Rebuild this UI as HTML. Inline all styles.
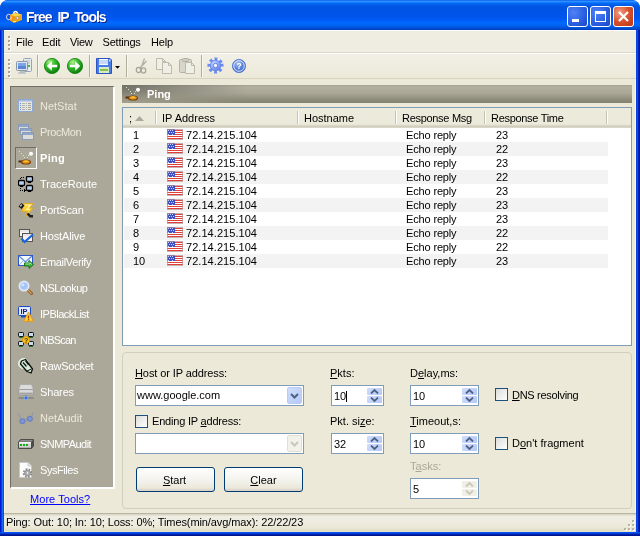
<!DOCTYPE html>
<html><head><meta charset="utf-8"><title>Free IP Tools</title>
<style>
*{box-sizing:border-box;margin:0;padding:0}
html,body{width:640px;height:536px;overflow:hidden;background:#fff}
body{font:11px "Liberation Sans",sans-serif;color:#000;position:relative}
.a{position:absolute;white-space:nowrap}
u{text-decoration:underline}
#frame{position:absolute;left:0;top:0;width:640px;height:536px;background:#0054e3;border-radius:8px 8px 0 0;overflow:hidden;will-change:transform}
#title{position:absolute;left:0;top:0;width:640px;height:30px;border-radius:8px 8px 0 0;
background:linear-gradient(to bottom,#0058ee 0%,#3593ff 4%,#288eff 6%,#127dff 8%,#036ffc 10%,#0262ee 14%,#0057e5 20%,#0054e3 24%,#0055eb 56%,#005bf5 66%,#026afe 76%,#0062ef 86%,#0056e0 90%,#004cd0 95%,#003cb8 100%)}
#title .txt{position:absolute;left:26px;top:9px;font:bold 14px "Liberation Sans",sans-serif;color:#fff;text-shadow:1px 1px 0 #0a2a9c;white-space:nowrap;letter-spacing:-1px;word-spacing:3px}
.tb{position:absolute;top:6px;width:21px;height:21px;border:1px solid #fff;border-radius:3px;background:radial-gradient(circle at 30% 30%,#4f82f5 0%,#2a5de0 60%,#1c44c4 100%)}
.tb.close{background:radial-gradient(circle at 30% 30%,#f0a088 0%,#d8502c 50%,#b93414 100%)}
#client{position:absolute;left:4px;top:30px;width:632px;height:502px;background:#ece9d8;box-shadow:inset 1px 0 0 #fbf3dc,inset -1px 0 0 #fbf3dc}
#bl{position:absolute;left:0;top:30px;width:4px;height:506px;background:linear-gradient(to right,#0019cf 0,#0019cf 1px,#0a40e0 1px,#0a40e0 2px,#166aee 2px,#166aee 3px,#0054e3 3px)}
#br{position:absolute;left:636px;top:30px;width:4px;height:506px;background:linear-gradient(to right,#0842ea 0,#0842ea 1px,#0a50e0 1px,#0a50e0 2px,#0024b0 2px,#0024b0 3px,#001590 3px)}
#bb{position:absolute;left:0;top:532px;width:640px;height:4px;background:linear-gradient(to bottom,#0a50f0 0,#0a50f0 1px,#0040d8 1px,#0040d8 2px,#0020a8 2px,#0020a8 3px,#001590 3px)}
#menubar{position:absolute;left:0;top:0;width:632px;height:23px;border-top:1px solid #fff;border-bottom:1px solid #dcd8c8;background:#efede2}
.mi{position:absolute;top:5px;font-size:11px}
.grip{position:absolute;width:3px;background:linear-gradient(to bottom,#a8a594 0,#a8a594 2px,transparent 2px) 0 0/2px 4px repeat-y,linear-gradient(to bottom,transparent 0,transparent 1px,#fff 1px,#fff 3px,transparent 3px) 1px 0/2px 4px repeat-y}
#toolbar{position:absolute;left:0;top:23px;width:632px;height:26px;border-top:1px solid #fff;border-bottom:1px solid #d8d4c2;background:linear-gradient(to bottom,#f2f0e6,#ece9d8)}
.sep{position:absolute;top:1px;width:2px;height:22px;border-left:1px solid #b0ad9c;border-right:1px solid #f8f7f0}
#side{position:absolute;left:6px;top:56px;width:105px;height:403px;background:#aca899;border-top:1px solid #716f64;border-left:1px solid #716f64;border-right:2px solid #fff;border-bottom:2px solid #fff}
.si{position:absolute;left:29px;font-size:11px;color:#fff;white-space:nowrap}
.si.dis{color:#ece9d8}
.selbox{position:absolute;left:4px;top:60px;width:22px;height:22px;border:1px solid;border-color:#716f64 #fff #fff #716f64}
.ic{line-height:0;position:absolute;left:7px;width:16px;height:16px}
#hdr{position:absolute;left:118px;top:55px;width:510px;height:18px;background:linear-gradient(to bottom,#a5a293 0,#b3b0a0 2px,#aaa797 45%,#8e8c7b 80%,#838170 100%)}
#hdr .ov{position:absolute;left:0;top:0;width:125px;height:18px;background:linear-gradient(to bottom,#74726a 0%,#7f7d71 35%,#969382 70%,#a3a090 100%);-webkit-mask-image:linear-gradient(to right,#000 0,#000 10px,transparent 100%);mask-image:linear-gradient(to right,#000 0,#000 10px,transparent 100%)}
#hdr .t{position:absolute;left:25px;top:3px;font:bold 11px "Liberation Sans",sans-serif;color:#fff}
#lv{position:absolute;left:118px;top:77px;width:510px;height:239px;background:#fff;border:1px solid #7f9db9}
#lvh{position:absolute;left:0;top:0;width:508px;height:20px;background:linear-gradient(to bottom,#ebeadb 0,#ebeadb 16px,#e2dfce 17px,#d6d2c2 18px,#cbc7b8 19px,#e8e6da 20px)}
.hc{position:absolute;top:4px;font-size:11px}
.hs{position:absolute;top:3px;width:2px;height:13px;border-left:1px solid #c5c2b2;border-right:1px solid #fff}
.row{position:absolute;left:1px;width:484px;height:14px}
.row.alt{background:#f3f3f3}
.row span{position:absolute;top:0;line-height:14px;font-size:11px}
.flag{position:absolute;left:43px;top:1px;width:16px;height:11px}
#gb{position:absolute;left:118px;top:322px;width:510px;height:157px;border:1px solid #d0d0bf;border-radius:4px}
.gd{z-index:3;position:absolute;width:2px;height:2px;background:#b8b4a2;box-shadow:1px 1px 0 #fff}
.lbl{position:absolute;font-size:11px;white-space:nowrap}
.edit{position:absolute;background:#fff;border:1px solid #7f9db9;font-size:11px}
.edit span{position:absolute;left:2px;top:4px}
.edit.c span{left:1px;top:3px}
.cb{position:absolute;width:13px;height:13px;border:1px solid #1c5180;background:linear-gradient(135deg,#dcdcd7 0%,#fff 100%)}
.btn{position:absolute;height:25px;border:1px solid #003c74;border-radius:3px;background:linear-gradient(to bottom,#fff 0%,#f4f3ee 50%,#ece9dc 85%,#d6d0c5 100%);text-align:center;line-height:25px;font-size:11px}
.spin{position:absolute;right:1px;top:1px;width:15px;height:17px}
.sb{position:absolute;left:0;width:15px;height:7px;border-radius:1px;background:linear-gradient(135deg,#d0dcfc,#b4c8f6);line-height:0}
.sb svg{position:absolute;left:3px;top:1px}
.dd{position:absolute;right:1px;top:1px;width:15px;height:17px;border:1px solid #b8ccf8;border-radius:2px;background:linear-gradient(135deg,#cfdcfc,#b6c9f7)}
.dd.d{border-color:#e0dfd3;background:#f3f2ea}
.spin.d .sb{background:#f1f0e7}
.caret{position:static!important;display:inline-block;width:1px;height:11px;background:#000;vertical-align:-2px}
#status{position:absolute;left:0;top:483px;width:632px;height:19px;background:linear-gradient(to bottom,#b8b5a3 0,#b8b5a3 1px,#dad7c8 1px,#dad7c8 2px,#efede2 3px,#efede2 8px,#ece9d8 14px,#e4e0cc 17px,#dcd8c2 18px,#f4ecd0 19px)}
#status .t{position:absolute;left:2px;top:3px;font-size:11px;letter-spacing:-0.1px}
</style></head><body>
<div id="frame">
<div id="title"><div class="a" style="left:6px;top:10px"><svg width="17" height="14" viewBox="0 0 17 14" ><ellipse cx="2.800" cy="7" rx="2.300" ry="2.800" fill="none" stroke="#d8d4e8" stroke-width="1"/>
<path d="M7 3.500 Q9.500 -0.500 12 3.500" fill="none" stroke="#fff" stroke-width="1.300"/>
<path d="M4 5 L9 3 L16 4.500 L16 10 L8 13 L4 10.500 Z" fill="#f0a818"/><path d="M4 5 L9 3 L16 4.500 L10 6.500 Z" fill="#fcd848"/><path d="M4 5 L10 6.500 L8 13 L4 10.500 Z" fill="#e89010" opacity="0.600"/>
<rect x="10.500" y="6.500" width="1.600" height="3" rx="0.800" fill="#fff" stroke="#5a5ac0" stroke-width="0.400"/><rect x="4.500" y="6.500" width="1" height="3" fill="#fff" opacity="0.800"/><path d="M7 11.500 h3" stroke="#fff8d0" stroke-width="0.800"/></svg></div><div class="txt">Free IP Tools</div>
<div class="tb" style="left:567px"><div class="a" style="left:4px;top:12px;width:7px;height:3px;background:#fff"></div></div><div class="tb" style="left:590px"><div class="a" style="left:4px;top:4px;width:11px;height:11px;border:1px solid #fff;border-top-width:3px"></div></div><div class="tb close" style="left:613px"><svg class="a" style="left:4px;top:4px" width="11" height="11" viewBox="0 0 11 11"><path d="M1 1 L10 10 M10 1 L1 10" stroke="#fff" stroke-width="2.2"/></svg></div></div>
<div id="bl"></div><div id="br"></div><div id="bb"></div><div id="client">
<div id="menubar"><div class="grip" style="left:4px;top:5px;height:16px"></div>
<div class="mi" style="left:12px;letter-spacing:-0.1px">File</div>
<div class="mi" style="left:38px;letter-spacing:-0.1px">Edit</div>
<div class="mi" style="left:66px;letter-spacing:-0.3px">View</div>
<div class="mi" style="left:98.5px;letter-spacing:-0.2px">Settings</div>
<div class="mi" style="left:147px;letter-spacing:-0.2px">Help</div>
</div>
<div id="toolbar"><div class="grip" style="left:4px;top:5px;height:19px"></div>
<div class="sep" style="left:33px"></div>
<div class="sep" style="left:85px"></div>
<div class="sep" style="left:122px"></div>
<div class="sep" style="left:197px"></div>
<div class="a" style="left:12px;top:4px;line-height:0"><svg width="16" height="16" viewBox="0 0 16 16" ><rect x="7.500" y="0.500" width="8" height="13" rx="1" fill="#e8ecf0" stroke="#9aa4b0"/><rect x="9" y="2.500" width="5" height="1" fill="#b0b8c4"/><rect x="9" y="4.500" width="5" height="1" fill="#b0b8c4"/><rect x="12" y="7" width="2" height="2" fill="#48b048"/>
<rect x="0.500" y="3.500" width="11" height="9" rx="1" fill="#dfe4ea" stroke="#8a96a8"/><rect x="2" y="5" width="8" height="6" fill="#5a86d8"/><rect x="2" y="5" width="8" height="3" fill="#7ca4e8"/>
<rect x="4" y="13" width="4" height="1.500" fill="#b8c0cc"/><rect x="2.500" y="14.500" width="7" height="1.500" rx="0.700" fill="#d0d6de" stroke="#9aa4b0" stroke-width="0.500"/></svg></div>
<div class="a" style="left:40px;top:4px;line-height:0"><svg width="16" height="16" viewBox="0 0 16 16" ><defs><radialGradient id="gl" cx="0.350" cy="0.250" r="0.800"><stop offset="0" stop-color="#b8f08c"/><stop offset="0.400" stop-color="#38c030"/><stop offset="1" stop-color="#087808"/></radialGradient></defs>
<circle cx="8" cy="8" r="7.600" fill="url(#gl)" stroke="#0a7a0a" stroke-width="0.800"/><path d="M2.800 8 L7.800 3.200 L7.800 6.800 L13.200 6.800 L13.200 9.200 L7.800 9.200 L7.800 12.800 Z" fill="#fff"/></svg></div>
<div class="a" style="left:63px;top:4px;line-height:0"><svg width="16" height="16" viewBox="0 0 16 16" ><defs><radialGradient id="gr" cx="0.350" cy="0.250" r="0.800"><stop offset="0" stop-color="#b8f08c"/><stop offset="0.400" stop-color="#38c030"/><stop offset="1" stop-color="#087808"/></radialGradient></defs>
<circle cx="8" cy="8" r="7.600" fill="url(#gr)" stroke="#0a7a0a" stroke-width="0.800"/><g transform="translate(16,0) scale(-1,1)"><path d="M2.800 8 L7.800 3.200 L7.800 6.800 L13.200 6.800 L13.200 9.200 L7.800 9.200 L7.800 12.800 Z" fill="#fff"/></g></svg></div>
<div class="a" style="left:92px;top:4px;line-height:0"><svg width="16" height="16" viewBox="0 0 16 16" ><path d="M0.500 0.500 H14 L15.500 2 V15.500 H0.500 Z" fill="#4a7ce8" stroke="#2c54c0"/><rect x="3" y="1" width="9" height="6" fill="#f4f8ff"/><rect x="3" y="2.500" width="9" height="1" fill="#9cb8ec"/><rect x="3" y="4.500" width="9" height="1" fill="#9cb8ec"/>
<rect x="3" y="9" width="10" height="6" fill="#d8ecc0"/><rect x="4" y="11" width="8" height="2" fill="#88c050"/><rect x="13" y="1.500" width="1.500" height="2" fill="#c8d8f8"/></svg></div>
<div class="a" style="left:111px;top:11px;line-height:0"><svg width="5" height="3" viewBox="0 0 5 3" ><path d="M0 0 H5 L2.500 2.800 Z" fill="#000"/></svg></div>
<div class="a" style="left:131px;top:4px;line-height:0"><svg width="16" height="16" viewBox="0 0 16 16" ><path d="M9.500 0.500 L6 10 M11.500 3 L4.500 10.500" fill="none" stroke="#b4b2a4" stroke-width="1.400"/>
<ellipse cx="3.500" cy="12" rx="2.200" ry="2.600" fill="none" stroke="#a8a698" stroke-width="1.300"/><ellipse cx="8.500" cy="12.500" rx="2.200" ry="2.600" fill="none" stroke="#a8a698" stroke-width="1.300"/></svg></div>
<div class="a" style="left:152px;top:4px;line-height:0"><svg width="16" height="16" viewBox="0 0 16 16" ><path d="M0.5 0.5 H6.5 L9.5 3.5 V11.5 H0.5 Z" fill="#f0efe6" stroke="#bcbaac"/><path d="M6.5 0.5 V3.5 H9.5" fill="none" stroke="#bcbaac"/><path d="M6.5 4.5 H12.5 L15.5 7.5 V15.5 H6.5 Z" fill="#f0efe6" stroke="#bcbaac"/><path d="M12.5 4.5 V7.5 H15.5" fill="none" stroke="#bcbaac"/></svg></div>
<div class="a" style="left:175px;top:4px;line-height:0"><svg width="16" height="16" viewBox="0 0 16 16" ><rect x="0.500" y="1.500" width="12" height="13" rx="1" fill="#d8d6ca" stroke="#b4b2a4"/><rect x="3.500" y="0.500" width="6" height="3" rx="1" fill="#cfcdc0" stroke="#b0aea0"/><path d="M6.5 4.5 H12.5 L15.5 7.5 V15.5 H6.5 Z" fill="#f0efe6" stroke="#bcbaac"/><path d="M12.5 4.5 V7.5 H15.5" fill="none" stroke="#bcbaac"/></svg></div>
<div class="a" style="left:203px;top:3px;line-height:0"><svg width="17" height="17" viewBox="0 0 17 17" ><defs><radialGradient id="gg" cx="0.350" cy="0.300" r="0.800"><stop offset="0" stop-color="#c4d4ff"/><stop offset="0.600" stop-color="#86a2f6"/><stop offset="1" stop-color="#5878e4"/></radialGradient></defs>
<circle cx="8.500" cy="8.500" r="6.400" fill="none" stroke="#6c8cf0" stroke-width="3.400" stroke-dasharray="2.700 2.327" transform="rotate(-15 8.500 8.500)"/>
<circle cx="8.500" cy="8.500" r="5.300" fill="url(#gg)" stroke="#5c7ce8" stroke-width="0.800"/><circle cx="8.500" cy="8.500" r="2.200" fill="#f4f4fc" stroke="#5470d8" stroke-width="0.900"/></svg></div>
<div class="a" style="left:228px;top:5px;line-height:0"><svg width="14" height="14" viewBox="0 0 14 14" ><defs><radialGradient id="gh" cx="0.400" cy="0.300" r="0.800"><stop offset="0" stop-color="#a8c0f0"/><stop offset="0.500" stop-color="#5c84dc"/><stop offset="1" stop-color="#3c64c0"/></radialGradient></defs>
<circle cx="7" cy="7" r="6.600" fill="url(#gh)" stroke="#4a70d0" stroke-width="0.800"/><circle cx="7" cy="7" r="5.300" fill="none" stroke="#e4ecfc" stroke-width="0.900"/>
<text x="4.600" y="10.200" font-family="Liberation Sans, sans-serif" font-weight="bold" font-size="8.500" fill="#fff">?</text></svg></div>
</div>
<div id="side"><div class="selbox"></div>
<div class="ic" style="top:11px"><svg width="16" height="16" viewBox="0 0 16 16" ><rect x="0.5" y="1.5" width="14" height="12" fill="#e6e6e0" stroke="#8ca8d4"/>
<rect x="1" y="2" width="13" height="1.500" fill="#a4bce4"/><rect x="2" y="5" width="1" height="1" fill="#6c8cd0"/><rect x="4" y="5" width="3" height="1" fill="#b4b4ac"/><rect x="8" y="5" width="1" height="1" fill="#a8a8a0"/><rect x="10" y="5" width="3" height="1" fill="#a4a49c"/><rect x="2" y="7" width="1" height="1" fill="#6c8cd0"/><rect x="4" y="7" width="3" height="1" fill="#b4b4ac"/><rect x="8" y="7" width="1" height="1" fill="#a8a8a0"/><rect x="10" y="7" width="3" height="1" fill="#a4a49c"/><rect x="2" y="9" width="1" height="1" fill="#6c8cd0"/><rect x="4" y="9" width="3" height="1" fill="#b4b4ac"/><rect x="8" y="9" width="1" height="1" fill="#a8a8a0"/><rect x="10" y="9" width="3" height="1" fill="#a4a49c"/><rect x="2" y="11" width="1" height="1" fill="#6c8cd0"/><rect x="4" y="11" width="3" height="1" fill="#b4b4ac"/><rect x="8" y="11" width="1" height="1" fill="#a8a8a0"/><rect x="10" y="11" width="3" height="1" fill="#a4a49c"/></svg></div><div class="si dis" style="top:13px;letter-spacing:0px">NetStat</div>
<div class="ic" style="top:37px"><svg width="16" height="16" viewBox="0 0 16 16" ><rect x="0.5" y="0.5" width="10" height="6" fill="#dedcd6" stroke="#8a9cba"/><rect x="1" y="1" width="9" height="2" fill="#8fa6cc"/><rect x="2.5" y="4.5" width="11" height="6" fill="#dedcd6" stroke="#8a9cba"/><rect x="3" y="5" width="10" height="2" fill="#8fa6cc"/><rect x="4.5" y="8.5" width="11" height="7" fill="#dedcd6" stroke="#8a9cba"/><rect x="5" y="9" width="10" height="2" fill="#8fa6cc"/></svg></div><div class="si dis" style="top:39px;letter-spacing:-0.4px">ProcMon</div>
<div class="ic" style="top:63px"><svg width="16" height="16" viewBox="0 0 16 16" ><g fill="#cfe8c8"><rect x="1" y="1" width="1" height="1"/><rect x="3" y="3" width="1" height="1"/><rect x="5" y="5" width="1" height="1"/><rect x="6" y="7" width="1" height="1"/><rect x="9" y="7" width="1" height="1"/><rect x="10" y="5" width="1" height="1"/></g>
<circle cx="13" cy="3.800" r="2" fill="#fff"/>
<path d="M0.500 11.500h4" stroke="#5a2a08" stroke-width="2"/>
<ellipse cx="8" cy="12" rx="5" ry="2.600" fill="#7a3c0a"/>
<ellipse cx="8" cy="11.700" rx="3.800" ry="1.800" fill="#e49a1c"/>
<ellipse cx="8" cy="11.200" rx="2" ry="0.800" fill="#f8c848"/></svg></div><div class="si" style="top:65px;font-weight:bold;letter-spacing:0.3px">Ping</div>
<div class="ic" style="top:89px"><svg width="16" height="16" viewBox="0 0 16 16" ><rect x="8.5" y="0.5" width="6" height="5" rx="1" fill="#b8d0f0" stroke="#000" stroke-width="1.300"/><rect x="10" y="6" width="3" height="1" fill="#000"/><rect x="0.5" y="4.5" width="6" height="5" rx="1" fill="#b8d0f0" stroke="#000" stroke-width="1.300"/><rect x="2" y="10" width="3" height="1" fill="#000"/><rect x="8.5" y="9.5" width="6" height="5" rx="1" fill="#b8d0f0" stroke="#000" stroke-width="1.300"/><rect x="10" y="15" width="3" height="1" fill="#000"/><g fill="#000"><rect x="3" y="1" width="1" height="1"/><rect x="5" y="1" width="1" height="1"/><rect x="2" y="2" width="1" height="1"/><rect x="2" y="12" width="1" height="1"/><rect x="2" y="14" width="1" height="1"/><rect x="4" y="14" width="1" height="1"/><rect x="6" y="13" width="1" height="3"/><rect x="7" y="14" width="1" height="1"/></g></svg></div><div class="si" style="top:91px;letter-spacing:0px">TraceRoute</div>
<div class="ic" style="top:115px"><svg width="16" height="16" viewBox="0 0 16 16" ><path d="M5.500 1.500 L15.500 1.500 L11.500 6 L15 6 L7.500 15 L9.500 9.500 L4.500 9.500 Z" fill="#f8d23c" stroke="#e8a818" stroke-width="0.900" stroke-linejoin="round"/>
<path d="M7 3 L12.500 3 L9 7.500 L12 7.500" fill="none" stroke="#fff4b0" stroke-width="1.200"/>
<path d="M0.500 4.500 L3.500 1 L6.500 3.500 L3.500 7 Z" fill="#1a1a1a"/><path d="M2.300 4.300 L3.800 2.600" stroke="#e8e8e8" stroke-width="1.200"/>
<path d="M9.500 11.500 L12.500 14.500" stroke="#1a1a1a" stroke-width="2.400"/><rect x="11.500" y="13" width="3.500" height="2.500" fill="#222"/></svg></div><div class="si" style="top:117px;letter-spacing:-0.2px">PortScan</div>
<div class="ic" style="top:141px"><svg width="16" height="16" viewBox="0 0 16 16" ><rect x="1.5" y="1.5" width="10" height="7" fill="#f4f4f4" stroke="#555"/><rect x="2" y="2" width="9" height="2" fill="#e8e8e8"/><rect x="4.5" y="5.5" width="10" height="8" fill="#f4f4f4" stroke="#555"/><rect x="5" y="6" width="9" height="2" fill="#e8e8e8"/><path d="M3.500 10.500 L6.500 14 L15 6.500" fill="none" stroke="#1a64e0" stroke-width="2.200"/></svg></div><div class="si" style="top:143px;letter-spacing:-0.15px">HostAlive</div>
<div class="ic" style="top:167px"><svg width="16" height="16" viewBox="0 0 16 16" ><rect x="0.5" y="1.500" width="14" height="10" fill="#f4f8ff" stroke="#2a56c8"/>
<path d="M1 2 L7.500 8 L14 2" fill="none" stroke="#5a88e0" stroke-width="1.200"/><path d="M1 11 L5.500 6.500 M14 11 L9.500 6.500" stroke="#9ab8f0" stroke-width="1"/>
<path d="M6.500 9 L11 9 L11 6.500 L15.500 10.500 L11 14.500 L11 12 L6.500 12 Z" fill="#3cb43c" stroke="#0e6e0e" stroke-width="0.9"/>
<path d="M7.500 10 L11.800 10 L11.800 8.800 L13.800 10.500" fill="none" stroke="#b4ecb0" stroke-width="0.9"/></svg></div><div class="si" style="top:169px;letter-spacing:-0.35px">EmailVerify</div>
<div class="ic" style="top:193px"><svg width="16" height="16" viewBox="0 0 16 16" ><path d="M9 9 L13.500 13.500" stroke="#8a5a22" stroke-width="3" stroke-linecap="round"/><path d="M9.500 9.500 L13.300 13.300" stroke="#e0a860" stroke-width="1.200" stroke-linecap="round"/>
<circle cx="6" cy="6" r="4.800" fill="#bcd4f8" stroke="#dce8fc" stroke-width="1.400"/><circle cx="6" cy="6" r="3.200" fill="#a8c4f4"/><circle cx="4.800" cy="4.800" r="1.500" fill="#d4e4fc"/></svg></div><div class="si" style="top:195px;letter-spacing:-0.5px">NSLookup</div>
<div class="ic" style="top:219px"><svg width="16" height="16" viewBox="0 0 16 16" ><rect x="0.5" y="0.500" width="12" height="9" rx="1" fill="#d8e4fc" stroke="#1c48c0"/><rect x="1.500" y="1.500" width="10" height="7" fill="#e8f0ff"/>
<text x="2.500" y="7.800" font-family="Liberation Sans, sans-serif" font-weight="bold" font-size="7.500" fill="#102080">IP</text>
<rect x="3" y="10" width="5" height="1.500" fill="#1c48c0"/>
<path d="M10.500 6 L15.500 15.300 L5.500 15.300 Z" fill="#f8d038" stroke="#e89010" stroke-width="0.9" stroke-linejoin="round"/><path d="M10.500 9.500v3" stroke="#a04000" stroke-width="1.300"/><rect x="9.850" y="13.200" width="1.300" height="1.200" fill="#a04000"/></svg></div><div class="si" style="top:221px;letter-spacing:-0.5px">IPBlackList</div>
<div class="ic" style="top:245px"><svg width="16" height="16" viewBox="0 0 16 16" ><path d="M3 3 L13 13 M13 3 L3 13" stroke="#222" stroke-width="1.400"/><rect x="0.5" y="0.5" width="5" height="4" rx="0.8" fill="#c8dcf4" stroke="#111"/><rect x="1" y="5" width="4" height="1" fill="#2a7a2a"/><rect x="10.5" y="0.5" width="5" height="4" rx="0.8" fill="#c8dcf4" stroke="#111"/><rect x="11" y="5" width="4" height="1" fill="#2a7a2a"/><rect x="0.5" y="9.5" width="5" height="4" rx="0.8" fill="#c8dcf4" stroke="#111"/><rect x="1" y="14" width="4" height="1" fill="#2a7a2a"/><rect x="10.5" y="9.5" width="5" height="4" rx="0.8" fill="#c8dcf4" stroke="#111"/><rect x="11" y="14" width="4" height="1" fill="#2a7a2a"/><circle cx="8" cy="8" r="3.600" fill="#f8c41c" stroke="#d89408" stroke-width="0.800"/><text x="6" y="10.600" font-family="Liberation Sans, sans-serif" font-weight="bold" font-size="7" fill="#5a3200">?</text></svg></div><div class="si" style="top:247px;letter-spacing:-0.8px">NBScan</div>
<div class="ic" style="top:271px"><svg width="16" height="16" viewBox="0 0 16 16" ><circle cx="5.500" cy="5.500" r="5" fill="#cfe8d4" stroke="#e8f4e8" stroke-width="1"/>
<path d="M3.500 3 L7.500 1.500 L14.500 11 L13 15 L9 13.500 L2.500 6 Z" fill="#d4ecd8" stroke="#111" stroke-width="1.300" stroke-linejoin="round"/>
<path d="M5 4.500 L8.500 8.500 M7.500 3 L10.500 7" stroke="#111" stroke-width="1.200"/><path d="M9 13 L13.500 11" stroke="#111" stroke-width="1"/></svg></div><div class="si" style="top:273px;letter-spacing:-0.25px">RawSocket</div>
<div class="ic" style="top:297px"><svg width="16" height="16" viewBox="0 0 16 16" ><path d="M2.500 0.500 L13.500 0.500 L15.500 5.500 L0.500 5.500 Z" fill="#dcdcdc" stroke="#a8a8a8" stroke-width="0.800"/>
<rect x="0.500" y="5.500" width="15" height="5.500" rx="1" fill="#c4c4c4" stroke="#989898" stroke-width="0.800"/><path d="M1.500 7h13" stroke="#ececec"/><path d="M1.500 9.500h13" stroke="#a0a0a0"/>
<path d="M8 11v2.500M0.500 14h15" stroke="#808080" stroke-width="1.500"/><circle cx="8" cy="14" r="1.800" fill="#2a6cf0" stroke="#9cc0ff" stroke-width="0.600"/></svg></div><div class="si" style="top:299px;letter-spacing:-0.15px">Shares</div>
<div class="ic" style="top:323px"><svg width="16" height="16" viewBox="0 0 16 16" ><path d="M0.500 3.500 L2.500 9 M15 2.500 L13.500 7" fill="none" stroke="#8a94a8" stroke-width="1"/><path d="M6.800 10.500 Q8 9 9.500 9.200" fill="none" stroke="#8a94a8" stroke-width="1"/>
<ellipse cx="4.500" cy="11.200" rx="2.700" ry="2.500" fill="#7c94d8" stroke="#6478b4" stroke-width="0.900"/><ellipse cx="11.800" cy="8.800" rx="2.700" ry="2.500" fill="#7c94d8" stroke="#6478b4" stroke-width="0.900"/></svg></div><div class="si dis" style="top:325px;letter-spacing:0px">NetAudit</div>
<div class="ic" style="top:349px"><svg width="16" height="16" viewBox="0 0 16 16" ><path d="M0.500 6 L2.500 3.500 L15.500 3.500 L15.500 10 L13.500 12.500 L0.500 12.500 Z" fill="#4a4a4a" stroke="#3a3a3a" stroke-width="0.700"/><path d="M1 5.800 L2.800 4 L15 4 L13.300 5.800 Z" fill="#8c8c8c"/>
<rect x="1" y="6" width="12" height="6" fill="#d4d4d4"/><rect x="1" y="6" width="12" height="1.500" fill="#f4f4f4"/><rect x="1" y="11" width="12" height="1" fill="#b0b0b0"/>
<g fill="#10b010"><rect x="2" y="8" width="2" height="2"/><rect x="5" y="8" width="2" height="2"/><rect x="8" y="8" width="2" height="2"/></g></svg></div><div class="si" style="top:351px;letter-spacing:-0.55px">SNMPAudit</div>
<div class="ic" style="top:375px"><svg width="16" height="16" viewBox="0 0 16 16" ><path d="M1.500 0.500 L10 0.500 L13.500 4 L13.500 15.500 L1.500 15.500 Z" fill="#fcfcfc" stroke="#c4c4c4" stroke-width="0.900"/><path d="M10 0.500 L10 4 L13.500 4" fill="#e4e4e4" stroke="#c4c4c4" stroke-width="0.800"/>
<circle cx="9.500" cy="11" r="3.600" fill="none" stroke="#8c8c8c" stroke-width="2.400" stroke-dasharray="1.600 1.227" transform="rotate(10 9.500 11)"/><circle cx="9.500" cy="11" r="2.900" fill="#b4b4b4" stroke="#8a8a8a" stroke-width="0.800"/><circle cx="9.500" cy="11" r="1.200" fill="#fcfcfc" stroke="#8a8a8a" stroke-width="0.500"/></svg></div><div class="si" style="top:377px;letter-spacing:-0.45px">SysFiles</div>
</div>
<div class="a" style="left:26px;top:463px;color:#0000ff;text-decoration:underline;font-size:11px;letter-spacing:0.05px">More Tools?</div>
<div id="hdr"><div class="ov"></div><div class="a" style="left:3px;top:1px;line-height:0"><svg width="16" height="16" viewBox="0 0 16 16" ><g fill="#cfe8c8"><rect x="1" y="1" width="1" height="1"/><rect x="3" y="3" width="1" height="1"/><rect x="5" y="5" width="1" height="1"/><rect x="6" y="7" width="1" height="1"/><rect x="9" y="7" width="1" height="1"/><rect x="10" y="5" width="1" height="1"/></g>
<circle cx="13" cy="3.800" r="2" fill="#fff"/>
<path d="M0.500 11.500h4" stroke="#5a2a08" stroke-width="2"/>
<ellipse cx="8" cy="12" rx="5" ry="2.600" fill="#7a3c0a"/>
<ellipse cx="8" cy="11.700" rx="3.800" ry="1.800" fill="#e49a1c"/>
<ellipse cx="8" cy="11.200" rx="2" ry="0.800" fill="#f8c848"/></svg></div><div class="t">Ping</div></div>
<div id="lv"><div id="lvh">
<div class="hc" style="left:6px;letter-spacing:0px">;</div>
<div class="hc" style="left:39px;letter-spacing:0px">IP Address</div>
<div class="hc" style="left:181px;letter-spacing:0px">Hostname</div>
<div class="hc" style="left:279px;letter-spacing:-0.3px">Response Msg</div>
<div class="hc" style="left:368px;letter-spacing:-0.3px">Response Time</div>
<svg class="a" style="left:12px;top:8px" width="9" height="5" viewBox="0 0 9 5"><path d="M0 5 L4.5 0 L9 5 Z" fill="#aca899"/></svg>
<div class="hs" style="left:32px"></div>
<div class="hs" style="left:174px"></div>
<div class="hs" style="left:272px"></div>
<div class="hs" style="left:361px"></div>
<div class="hs" style="left:483px"></div>
</div>
<div class="row" style="top:20px"><span style="left:9px">1</span><div class="flag"><svg width="16" height="11" viewBox="0 0 16 11" shape-rendering="crispEdges"><rect width="16" height="11" fill="#fff"/><g fill="#e0403c"><rect y="1" width="16" height="1"/><rect y="3" width="16" height="1"/><rect y="5" width="16" height="1"/><rect y="7" width="16" height="1"/><rect y="9" width="16" height="1"/></g>
<rect x="0" y="0" width="8" height="6" fill="#3c50c8"/><g fill="#c8d0f8"><rect x="1" y="1" width="1" height="1"/><rect x="3" y="1" width="1" height="1"/><rect x="5" y="1" width="1" height="1"/><rect x="2" y="3" width="1" height="1"/><rect x="4" y="3" width="1" height="1"/><rect x="6" y="3" width="1" height="1"/><rect x="1" y="4.500" width="1" height="1"/><rect x="5" y="4.500" width="1" height="1"/></g>
<rect x="0.500" y="0.500" width="15" height="10" fill="none" stroke="#b89090" stroke-opacity="0.700"/></svg></div><span style="left:62px;letter-spacing:0.05px">72.14.215.104</span><span style="left:282px;letter-spacing:-0.15px">Echo reply</span><span style="left:372px">23</span></div>
<div class="row alt" style="top:34px"><span style="left:9px">2</span><div class="flag"><svg width="16" height="11" viewBox="0 0 16 11" shape-rendering="crispEdges"><rect width="16" height="11" fill="#fff"/><g fill="#e0403c"><rect y="1" width="16" height="1"/><rect y="3" width="16" height="1"/><rect y="5" width="16" height="1"/><rect y="7" width="16" height="1"/><rect y="9" width="16" height="1"/></g>
<rect x="0" y="0" width="8" height="6" fill="#3c50c8"/><g fill="#c8d0f8"><rect x="1" y="1" width="1" height="1"/><rect x="3" y="1" width="1" height="1"/><rect x="5" y="1" width="1" height="1"/><rect x="2" y="3" width="1" height="1"/><rect x="4" y="3" width="1" height="1"/><rect x="6" y="3" width="1" height="1"/><rect x="1" y="4.500" width="1" height="1"/><rect x="5" y="4.500" width="1" height="1"/></g>
<rect x="0.500" y="0.500" width="15" height="10" fill="none" stroke="#b89090" stroke-opacity="0.700"/></svg></div><span style="left:62px;letter-spacing:0.05px">72.14.215.104</span><span style="left:282px;letter-spacing:-0.15px">Echo reply</span><span style="left:372px">22</span></div>
<div class="row" style="top:48px"><span style="left:9px">3</span><div class="flag"><svg width="16" height="11" viewBox="0 0 16 11" shape-rendering="crispEdges"><rect width="16" height="11" fill="#fff"/><g fill="#e0403c"><rect y="1" width="16" height="1"/><rect y="3" width="16" height="1"/><rect y="5" width="16" height="1"/><rect y="7" width="16" height="1"/><rect y="9" width="16" height="1"/></g>
<rect x="0" y="0" width="8" height="6" fill="#3c50c8"/><g fill="#c8d0f8"><rect x="1" y="1" width="1" height="1"/><rect x="3" y="1" width="1" height="1"/><rect x="5" y="1" width="1" height="1"/><rect x="2" y="3" width="1" height="1"/><rect x="4" y="3" width="1" height="1"/><rect x="6" y="3" width="1" height="1"/><rect x="1" y="4.500" width="1" height="1"/><rect x="5" y="4.500" width="1" height="1"/></g>
<rect x="0.500" y="0.500" width="15" height="10" fill="none" stroke="#b89090" stroke-opacity="0.700"/></svg></div><span style="left:62px;letter-spacing:0.05px">72.14.215.104</span><span style="left:282px;letter-spacing:-0.15px">Echo reply</span><span style="left:372px">23</span></div>
<div class="row alt" style="top:62px"><span style="left:9px">4</span><div class="flag"><svg width="16" height="11" viewBox="0 0 16 11" shape-rendering="crispEdges"><rect width="16" height="11" fill="#fff"/><g fill="#e0403c"><rect y="1" width="16" height="1"/><rect y="3" width="16" height="1"/><rect y="5" width="16" height="1"/><rect y="7" width="16" height="1"/><rect y="9" width="16" height="1"/></g>
<rect x="0" y="0" width="8" height="6" fill="#3c50c8"/><g fill="#c8d0f8"><rect x="1" y="1" width="1" height="1"/><rect x="3" y="1" width="1" height="1"/><rect x="5" y="1" width="1" height="1"/><rect x="2" y="3" width="1" height="1"/><rect x="4" y="3" width="1" height="1"/><rect x="6" y="3" width="1" height="1"/><rect x="1" y="4.500" width="1" height="1"/><rect x="5" y="4.500" width="1" height="1"/></g>
<rect x="0.500" y="0.500" width="15" height="10" fill="none" stroke="#b89090" stroke-opacity="0.700"/></svg></div><span style="left:62px;letter-spacing:0.05px">72.14.215.104</span><span style="left:282px;letter-spacing:-0.15px">Echo reply</span><span style="left:372px">22</span></div>
<div class="row" style="top:76px"><span style="left:9px">5</span><div class="flag"><svg width="16" height="11" viewBox="0 0 16 11" shape-rendering="crispEdges"><rect width="16" height="11" fill="#fff"/><g fill="#e0403c"><rect y="1" width="16" height="1"/><rect y="3" width="16" height="1"/><rect y="5" width="16" height="1"/><rect y="7" width="16" height="1"/><rect y="9" width="16" height="1"/></g>
<rect x="0" y="0" width="8" height="6" fill="#3c50c8"/><g fill="#c8d0f8"><rect x="1" y="1" width="1" height="1"/><rect x="3" y="1" width="1" height="1"/><rect x="5" y="1" width="1" height="1"/><rect x="2" y="3" width="1" height="1"/><rect x="4" y="3" width="1" height="1"/><rect x="6" y="3" width="1" height="1"/><rect x="1" y="4.500" width="1" height="1"/><rect x="5" y="4.500" width="1" height="1"/></g>
<rect x="0.500" y="0.500" width="15" height="10" fill="none" stroke="#b89090" stroke-opacity="0.700"/></svg></div><span style="left:62px;letter-spacing:0.05px">72.14.215.104</span><span style="left:282px;letter-spacing:-0.15px">Echo reply</span><span style="left:372px">23</span></div>
<div class="row alt" style="top:90px"><span style="left:9px">6</span><div class="flag"><svg width="16" height="11" viewBox="0 0 16 11" shape-rendering="crispEdges"><rect width="16" height="11" fill="#fff"/><g fill="#e0403c"><rect y="1" width="16" height="1"/><rect y="3" width="16" height="1"/><rect y="5" width="16" height="1"/><rect y="7" width="16" height="1"/><rect y="9" width="16" height="1"/></g>
<rect x="0" y="0" width="8" height="6" fill="#3c50c8"/><g fill="#c8d0f8"><rect x="1" y="1" width="1" height="1"/><rect x="3" y="1" width="1" height="1"/><rect x="5" y="1" width="1" height="1"/><rect x="2" y="3" width="1" height="1"/><rect x="4" y="3" width="1" height="1"/><rect x="6" y="3" width="1" height="1"/><rect x="1" y="4.500" width="1" height="1"/><rect x="5" y="4.500" width="1" height="1"/></g>
<rect x="0.500" y="0.500" width="15" height="10" fill="none" stroke="#b89090" stroke-opacity="0.700"/></svg></div><span style="left:62px;letter-spacing:0.05px">72.14.215.104</span><span style="left:282px;letter-spacing:-0.15px">Echo reply</span><span style="left:372px">23</span></div>
<div class="row" style="top:104px"><span style="left:9px">7</span><div class="flag"><svg width="16" height="11" viewBox="0 0 16 11" shape-rendering="crispEdges"><rect width="16" height="11" fill="#fff"/><g fill="#e0403c"><rect y="1" width="16" height="1"/><rect y="3" width="16" height="1"/><rect y="5" width="16" height="1"/><rect y="7" width="16" height="1"/><rect y="9" width="16" height="1"/></g>
<rect x="0" y="0" width="8" height="6" fill="#3c50c8"/><g fill="#c8d0f8"><rect x="1" y="1" width="1" height="1"/><rect x="3" y="1" width="1" height="1"/><rect x="5" y="1" width="1" height="1"/><rect x="2" y="3" width="1" height="1"/><rect x="4" y="3" width="1" height="1"/><rect x="6" y="3" width="1" height="1"/><rect x="1" y="4.500" width="1" height="1"/><rect x="5" y="4.500" width="1" height="1"/></g>
<rect x="0.500" y="0.500" width="15" height="10" fill="none" stroke="#b89090" stroke-opacity="0.700"/></svg></div><span style="left:62px;letter-spacing:0.05px">72.14.215.104</span><span style="left:282px;letter-spacing:-0.15px">Echo reply</span><span style="left:372px">23</span></div>
<div class="row alt" style="top:118px"><span style="left:9px">8</span><div class="flag"><svg width="16" height="11" viewBox="0 0 16 11" shape-rendering="crispEdges"><rect width="16" height="11" fill="#fff"/><g fill="#e0403c"><rect y="1" width="16" height="1"/><rect y="3" width="16" height="1"/><rect y="5" width="16" height="1"/><rect y="7" width="16" height="1"/><rect y="9" width="16" height="1"/></g>
<rect x="0" y="0" width="8" height="6" fill="#3c50c8"/><g fill="#c8d0f8"><rect x="1" y="1" width="1" height="1"/><rect x="3" y="1" width="1" height="1"/><rect x="5" y="1" width="1" height="1"/><rect x="2" y="3" width="1" height="1"/><rect x="4" y="3" width="1" height="1"/><rect x="6" y="3" width="1" height="1"/><rect x="1" y="4.500" width="1" height="1"/><rect x="5" y="4.500" width="1" height="1"/></g>
<rect x="0.500" y="0.500" width="15" height="10" fill="none" stroke="#b89090" stroke-opacity="0.700"/></svg></div><span style="left:62px;letter-spacing:0.05px">72.14.215.104</span><span style="left:282px;letter-spacing:-0.15px">Echo reply</span><span style="left:372px">22</span></div>
<div class="row" style="top:132px"><span style="left:9px">9</span><div class="flag"><svg width="16" height="11" viewBox="0 0 16 11" shape-rendering="crispEdges"><rect width="16" height="11" fill="#fff"/><g fill="#e0403c"><rect y="1" width="16" height="1"/><rect y="3" width="16" height="1"/><rect y="5" width="16" height="1"/><rect y="7" width="16" height="1"/><rect y="9" width="16" height="1"/></g>
<rect x="0" y="0" width="8" height="6" fill="#3c50c8"/><g fill="#c8d0f8"><rect x="1" y="1" width="1" height="1"/><rect x="3" y="1" width="1" height="1"/><rect x="5" y="1" width="1" height="1"/><rect x="2" y="3" width="1" height="1"/><rect x="4" y="3" width="1" height="1"/><rect x="6" y="3" width="1" height="1"/><rect x="1" y="4.500" width="1" height="1"/><rect x="5" y="4.500" width="1" height="1"/></g>
<rect x="0.500" y="0.500" width="15" height="10" fill="none" stroke="#b89090" stroke-opacity="0.700"/></svg></div><span style="left:62px;letter-spacing:0.05px">72.14.215.104</span><span style="left:282px;letter-spacing:-0.15px">Echo reply</span><span style="left:372px">22</span></div>
<div class="row alt" style="top:146px"><span style="left:9px">10</span><div class="flag"><svg width="16" height="11" viewBox="0 0 16 11" shape-rendering="crispEdges"><rect width="16" height="11" fill="#fff"/><g fill="#e0403c"><rect y="1" width="16" height="1"/><rect y="3" width="16" height="1"/><rect y="5" width="16" height="1"/><rect y="7" width="16" height="1"/><rect y="9" width="16" height="1"/></g>
<rect x="0" y="0" width="8" height="6" fill="#3c50c8"/><g fill="#c8d0f8"><rect x="1" y="1" width="1" height="1"/><rect x="3" y="1" width="1" height="1"/><rect x="5" y="1" width="1" height="1"/><rect x="2" y="3" width="1" height="1"/><rect x="4" y="3" width="1" height="1"/><rect x="6" y="3" width="1" height="1"/><rect x="1" y="4.500" width="1" height="1"/><rect x="5" y="4.500" width="1" height="1"/></g>
<rect x="0.500" y="0.500" width="15" height="10" fill="none" stroke="#b89090" stroke-opacity="0.700"/></svg></div><span style="left:62px;letter-spacing:0.05px">72.14.215.104</span><span style="left:282px;letter-spacing:-0.15px">Echo reply</span><span style="left:372px">23</span></div>
</div>
<div id="gb"></div>
<div class="lbl" style="left:131px;top:337px;letter-spacing:-0.1px"><u>H</u>ost or IP address:</div>
<div class="lbl" style="left:326px;top:337px;"><u>P</u>kts:</div>
<div class="lbl" style="left:406px;top:337px;">D<u>e</u>lay,ms:</div>
<div class="lbl" style="left:148px;top:385px;letter-spacing:-0.2px">Ending IP <u>a</u>ddress:</div>
<div class="lbl" style="left:326px;top:385px;">Pkt. si<u>z</u>e:</div>
<div class="lbl" style="left:406px;top:385px;"><u>T</u>imeout,s:</div>
<div class="lbl" style="left:406px;top:430px;color:#aca899">T<u>a</u>sks:</div>
<div class="lbl" style="left:508px;top:359px;letter-spacing:-0.3px"><u>D</u>NS resolving</div>
<div class="lbl" style="left:508px;top:407px;">D<u>o</u>n't fragment</div>
<div class="edit c" style="left:131px;top:355px;width:169px;height:21px"><span>www.google.com</span><div class="dd"><svg width="9" height="6" viewBox="0 0 9 6" style="position:absolute;left:2px;top:5px"><path d="M1 1 L4.5 4.5 L8 1" fill="none" stroke="#4d6185" stroke-width="2"/></svg></div></div>
<div class="edit c" style="left:131px;top:403px;width:169px;height:21px"><span></span><div class="dd d"><svg width="9" height="6" viewBox="0 0 9 6" style="position:absolute;left:2px;top:5px"><path d="M1 1 L4.5 4.5 L8 1" fill="none" stroke="#c9c7ba" stroke-width="2"/></svg></div></div>
<div class="edit" style="left:327px;top:355px;width:53px;height:21px"><span>10<span class="caret"></span></span><div class="spin"><div class="sb" style="top:1px"><svg width="9" height="5" viewBox="0 0 9 5"><path d="M1 4.500 L4.500 1 L8 4.500" fill="none" stroke="#4d6185" stroke-width="1.800"/></svg></div><div class="sb" style="top:9px"><svg width="9" height="5" viewBox="0 0 9 5"><path d="M1 0.500 L4.500 4 L8 0.500" fill="none" stroke="#4d6185" stroke-width="1.800"/></svg></div></div></div>
<div class="edit" style="left:327px;top:403px;width:53px;height:21px"><span>32</span><div class="spin"><div class="sb" style="top:1px"><svg width="9" height="5" viewBox="0 0 9 5"><path d="M1 4.500 L4.500 1 L8 4.500" fill="none" stroke="#4d6185" stroke-width="1.800"/></svg></div><div class="sb" style="top:9px"><svg width="9" height="5" viewBox="0 0 9 5"><path d="M1 0.500 L4.500 4 L8 0.500" fill="none" stroke="#4d6185" stroke-width="1.800"/></svg></div></div></div>
<div class="edit" style="left:406px;top:355px;width:69px;height:21px"><span>10</span><div class="spin"><div class="sb" style="top:1px"><svg width="9" height="5" viewBox="0 0 9 5"><path d="M1 4.500 L4.500 1 L8 4.500" fill="none" stroke="#4d6185" stroke-width="1.800"/></svg></div><div class="sb" style="top:9px"><svg width="9" height="5" viewBox="0 0 9 5"><path d="M1 0.500 L4.500 4 L8 0.500" fill="none" stroke="#4d6185" stroke-width="1.800"/></svg></div></div></div>
<div class="edit" style="left:406px;top:403px;width:69px;height:21px"><span>10</span><div class="spin"><div class="sb" style="top:1px"><svg width="9" height="5" viewBox="0 0 9 5"><path d="M1 4.500 L4.500 1 L8 4.500" fill="none" stroke="#4d6185" stroke-width="1.800"/></svg></div><div class="sb" style="top:9px"><svg width="9" height="5" viewBox="0 0 9 5"><path d="M1 0.500 L4.500 4 L8 0.500" fill="none" stroke="#4d6185" stroke-width="1.800"/></svg></div></div></div>
<div class="edit" style="left:406px;top:448px;width:69px;height:21px"><span>5</span><div class="spin d"><div class="sb" style="top:1px"><svg width="9" height="5" viewBox="0 0 9 5"><path d="M1 4.500 L4.500 1 L8 4.500" fill="none" stroke="#c9c7ba" stroke-width="1.800"/></svg></div><div class="sb" style="top:9px"><svg width="9" height="5" viewBox="0 0 9 5"><path d="M1 0.500 L4.500 4 L8 0.500" fill="none" stroke="#c9c7ba" stroke-width="1.800"/></svg></div></div></div>
<div class="cb" style="left:131px;top:385px"></div>
<div class="cb" style="left:491px;top:358px"></div>
<div class="cb" style="left:491px;top:407px"></div>
<div class="btn" style="left:132px;top:437px;width:79px;text-indent:-2px"><u>S</u>tart</div>
<div class="btn" style="left:220px;top:437px;width:79px"><u>C</u>lear</div>
<div class="gd" style="left:628px;top:490px"></div><div class="gd" style="left:624px;top:494px"></div><div class="gd" style="left:628px;top:494px"></div><div class="gd" style="left:620px;top:498px"></div><div class="gd" style="left:624px;top:498px"></div><div class="gd" style="left:628px;top:498px"></div>
<div id="status"><div class="t">Ping: Out: 10; In: 10; Loss: 0%; Times(min/avg/max): 22/22/23</div></div>
</div></div></body></html>
